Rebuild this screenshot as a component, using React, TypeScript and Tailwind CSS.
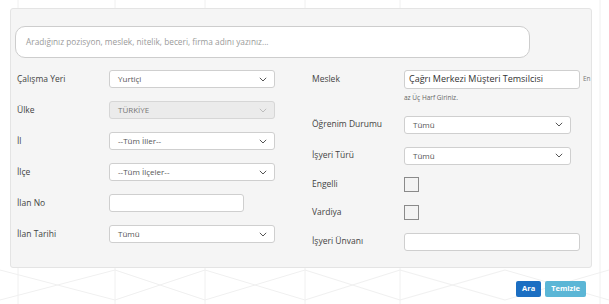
import React from 'react';

const font = { fontFamily: '"Open Sans", "Liberation Sans", sans-serif' };

function Chevron({ light }: { light?: boolean }) {
  return (
    <svg width="8" height="5" viewBox="0 0 8 5" className="shrink-0">
      <path d="M0.8 0.8 L4 4 L7.2 0.8" fill="none" stroke={light ? '#bdbdbd' : '#555'} strokeWidth="1" />
    </svg>
  );
}

function Select({ value, width, disabled }: { value: string; width: string; disabled?: boolean }) {
  return (
    <div
      className={`${width} h-[18px] flex items-center justify-between pl-[8px] pr-[7px] rounded-[3px] border ${
        disabled ? 'bg-[#ebebeb] border-[#d6d6d6] text-[#777]' : 'bg-white border-[#cfcfcf] text-[#555]'
      } text-[8px]`}
    >
      <span>{value}</span>
      <Chevron light={disabled} />
    </div>
  );
}

function Row({ label, children }: { label: string; children: React.ReactNode }) {
  return (
    <div className="flex items-center h-[18px]">
      <div className="w-[92px] shrink-0 text-[8.5px] text-[#444]">{label}</div>
      {children}
    </div>
  );
}

function Box() {
  return <div className="w-[15px] h-[15px] border border-[#8a8a8a] bg-[#f3f3f3]" />;
}

export default function App() {
  return (
    <div className="relative w-[609px] h-[304px] bg-white overflow-hidden" style={font}>
      {/* faint background pattern */}
      <svg className="absolute inset-0" width="609" height="304">
        <g stroke="#f0f0f0" strokeWidth="1" fill="none">
          <path d="M18 0 V304 M115 0 V304 M205 0 V304 M305 0 V304 M400 0 V304 M600 0 V304" />
          <path d="M0 270 L115 300 L205 270 L305 300 L400 270 L505 300 L609 270" />
          <path d="M0 300 L115 270 L205 300 L305 270 L400 300 L505 270 L609 300" />
        </g>
      </svg>

      <div className="relative pt-[8px] pl-[10px]">
        <div className="w-[582px] h-[260px] bg-[#f5f5f5] border border-[#e4e4e4] rounded-[3px] pt-[17px] pl-[4px]">
          <div className="w-[515px] h-[32px] bg-white border border-[#cdcdcd] rounded-[10px] flex items-center pl-[10px] text-[8.3px] text-[#9a9a9a]">
            Aradığınız pozisyon, meslek, nitelik, beceri, firma adını yazınız...
          </div>

          <div className="flex mt-[12px]">
            {/* left column */}
            <div className="w-[297px] pl-[2px] flex flex-col gap-[13px]">
              <Row label="Çalışma Yeri">
                <Select value="Yurtiçi" width="w-[166px]" />
              </Row>
              <Row label="Ülke">
                <Select value="TÜRKİYE" width="w-[166px]" disabled />
              </Row>
              <Row label="İl">
                <Select value="--Tüm İller--" width="w-[166px]" />
              </Row>
              <Row label="İlçe">
                <Select value="--Tüm İlçeler--" width="w-[166px]" />
              </Row>
              <Row label="İlan No">
                <div className="w-[135px] h-[18px] bg-white border border-[#cfcfcf] rounded-[3px]" />
              </Row>
              <Row label="İlan Tarihi">
                <Select value="Tümü" width="w-[166px]" />
              </Row>
            </div>

            {/* right column */}
            <div className="flex flex-col">
              <Row label="Meslek">
                <div className="w-[176px] h-[19px] bg-white border border-[#cfcfcf] rounded-[3px] flex items-center pl-[4px] text-[9px] text-[#333]">
                  Çağrı Merkezi Müşteri Temsilcisi
                </div>
                <span className="ml-[3px] text-[6.5px] text-[#777]">En</span>
              </Row>
              <div className="pl-[92px] mt-[5px] text-[6.5px] text-[#666]">az Üç Harf Giriniz.</div>
              <div className="flex flex-col gap-[13px] mt-[13px]">
                <Row label="Öğrenim Durumu">
                  <Select value="Tümü" width="w-[167px]" />
                </Row>
                <Row label="İşyeri Türü">
                  <Select value="Tümü" width="w-[167px]" />
                </Row>
              </div>
              <div className="flex flex-col gap-[13px] mt-[12px]">
                <div className="flex items-center h-[15px]">
                  <div className="w-[92px] text-[8.5px] text-[#444]">Engelli</div>
                  <Box />
                </div>
                <div className="flex items-center h-[15px]">
                  <div className="w-[92px] text-[8.5px] text-[#444]">Vardiya</div>
                  <Box />
                </div>
              </div>
              <div className="mt-[13px]">
                <Row label="İşyeri Ünvanı">
                  <div className="w-[176px] h-[18px] bg-white border border-[#cfcfcf] rounded-[3px]" />
                </Row>
              </div>
            </div>
          </div>
        </div>

        <div className="flex justify-end gap-[4px] mt-[13px] w-[576px]">
          <div className="h-[16px] px-[6px] flex items-center rounded-[2px] bg-[#1b6ec2] text-white text-[7.5px] font-bold">
            Ara
          </div>
          <div className="h-[16px] px-[6px] flex items-center rounded-[2px] bg-[#5bb6d6] text-white text-[7.5px] font-bold">
            Temizle
          </div>
        </div>
      </div>
    </div>
  );
}
